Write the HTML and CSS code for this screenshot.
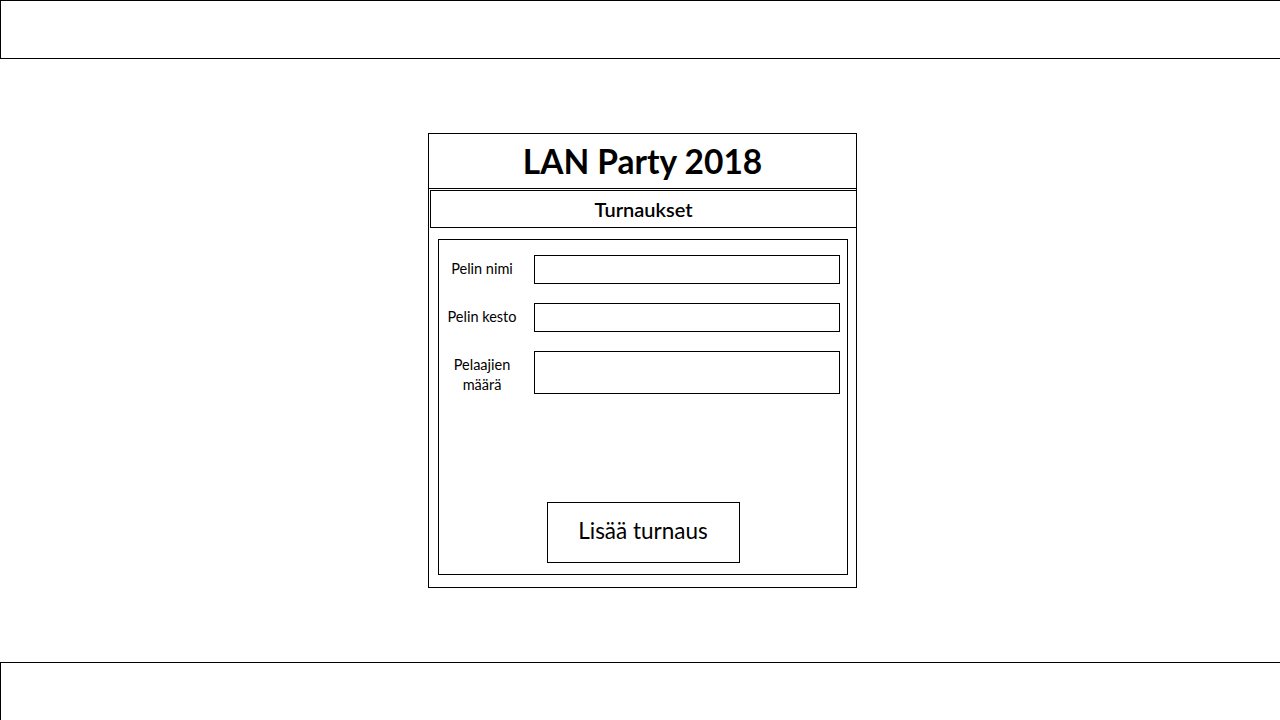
FILE: index.html
```html
<!DOCTYPE html>
<html lang="fi">
<head>
<meta charset="utf-8">
<title>LAN Party 2018</title>
<link rel="stylesheet" href="styles.css">
</head>
<body>
<header class="topbar"></header>
<main class="main">
  <section class="card">
    <div class="card-title">LAN Party 2018</div>
    <div class="card-sub">Turnaukset</div>
    <form class="form">
      <div class="row">
        <label class="label">Pelin nimi</label>
        <div class="input"></div>
      </div>
      <div class="row">
        <label class="label">Pelin kesto</label>
        <div class="input"></div>
      </div>
      <div class="row">
        <label class="label">Pelaajien<br>määrä</label>
        <div class="input tall"></div>
      </div>
      <div class="button">Lisää turnaus</div>
    </form>
  </section>
</main>
<footer class="bottombar"></footer>
</body>
</html>
```
FILE: styles.css
```css
* { box-sizing: border-box; }
html, body { margin: 0; padding: 0; }
body {
  width: 1280px;
  height: 720px;
  overflow: hidden;
  background: #fff;
  font-family: Lato, "Liberation Sans", sans-serif;
  color: #000;
  display: flex;
  flex-direction: column;
}
.topbar {
  width: 1290px;
  height: 59px;
  border: 1px solid #000;
  flex: none;
}
.main {
  flex: 1;
  padding: 74px 0 0 428px;
}
.card {
  width: 429px;
  height: 455px;
  border: 1px solid #000;
  display: flex;
  flex-direction: column;
}
.card-title {
  height: 55px;
  border-bottom: 1px solid #000;
  text-align: center;
  font-weight: 700;
  font-size: 33.5px;
  line-height: 54px;
}
.card-sub {
  margin: 1px 0 0 1px;
  width: 427px;
  height: 38px;
  border: 1px solid #000;
  text-align: center;
  font-size: 20px;
  font-weight: 600;
  line-height: 36px;
}
.form {
  margin: 11px 8px 0 9px;
  height: 336px;
  border: 1px solid #000;
  padding: 15px 7px 11px 0;
  display: flex;
  flex-direction: column;
  gap: 19px;
}
.row {
  display: flex;
  align-items: flex-start;
  gap: 9px;
}
.label {
  width: 86px;
  padding-top: 4px;
  text-align: center;
  font-size: 14.5px;
  line-height: 20px;
}
.input {
  width: 306px;
  height: 29px;
  border: 1px solid #000;
}
.input.tall { height: 43px; }
.button {
  margin-top: auto;
  align-self: center;
  width: 193px;
  height: 61px;
  border: 1px solid #000;
  text-align: center;
  font-size: 22.5px;
  line-height: 55px;
  margin-left: 7px;
}
.bottombar {
  flex: none;
  width: 1290px;
  height: 60px;
  border: 1px solid #000;
  margin-bottom: -2px;
}
```
